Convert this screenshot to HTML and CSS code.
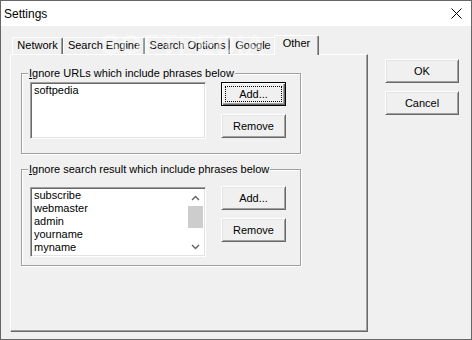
FILE: index.html
```html
<!DOCTYPE html>
<html>
<head>
<meta charset="utf-8">
<title>Settings</title>
<link rel="stylesheet" href="styles.css">
</head>
<body>
<div class="window">
  <div class="titlebar">
    <span class="title">Settings</span>
    <svg class="close" width="11" height="11" viewBox="0 0 11 11"><path d="M0.5 0.5 L10.5 10.5 M10.5 0.5 L0.5 10.5" stroke="#000" stroke-width="1" fill="none"/></svg>
  </div>
  <div class="body">
    <div class="tabctl">
      <div class="tabstrip">
        <div class="tab tab-network">Network</div>
        <div class="tab tab-engine">Search Engine</div>
        <div class="tab tab-options">Search Options</div>
        <div class="tab tab-google">Google</div>
        <div class="tab tab-other tab-active">Other</div>
      </div>
      <div class="panel">
        <div class="group group-urls">
          <div class="group-label"><u>I</u>gnore URLs which include phrases below</div>
          <div class="group-row row-urls">
            <div class="listbox lb-urls">
              <div class="items">
                <div class="item">softpedia</div>
              </div>
            </div>
            <div class="btncol">
              <button class="btn btn-small btn-default"><span class="focus">Add...</span></button>
              <button class="btn btn-small">Remove</button>
            </div>
          </div>
        </div>
        <div class="group group-results">
          <div class="group-label"><u>I</u>gnore search result which include phrases below</div>
          <div class="group-row row-results">
            <div class="listbox lb-results">
              <div class="items">
                <div class="item">subscribe</div>
                <div class="item">webmaster</div>
                <div class="item">admin</div>
                <div class="item">yourname</div>
                <div class="item">myname</div>
              </div>
              <div class="scrollbar">
                <div class="sb-btn">
                  <svg width="9" height="6" viewBox="0 0 9 6"><path d="M1 5 L4.5 1.5 L8 5" stroke="#606060" stroke-width="1.4" fill="none"/></svg>
                </div>
                <div class="sb-thumb"></div>
                <div class="sb-track"></div>
                <div class="sb-btn">
                  <svg width="9" height="6" viewBox="0 0 9 6"><path d="M1 1 L4.5 4.5 L8 1" stroke="#606060" stroke-width="1.4" fill="none"/></svg>
                </div>
              </div>
            </div>
            <div class="btncol">
              <button class="btn btn-small">Add...</button>
              <button class="btn btn-small">Remove</button>
            </div>
          </div>
        </div>
      </div>
    </div>
    <div class="actions">
      <button class="btn btn-wide">OK</button>
      <button class="btn btn-wide">Cancel</button>
    </div>
  </div>
  <div class="watermark">SOFTPEDIA<sup class="reg">®</sup></div>
</div>
</body>
</html>
```
FILE: styles.css
```css
* { box-sizing: border-box; }
html, body { margin: 0; padding: 0; background: #f0f0f0; }
body {
  font-family: "Liberation Sans", Arial, sans-serif;
  font-size: 11px;
  color: #000;
}
.window {
  position: relative;
  width: 472px;
  height: 340px;
  border: 1px solid #666;
  background: #f0f0f0;
  display: flex;
  flex-direction: column;
  overflow: hidden;
}
.titlebar {
  height: 25px;
  flex: none;
  background: #fff;
  display: flex;
  align-items: center;
  justify-content: space-between;
  padding: 0 9px 0 3px;
}
.title {
  font-size: 12px;
  line-height: 16px;
}
.close { display: block; }
.body {
  display: flex;
  padding: 9px 0 0 9px;
}
.tabctl {
  width: 358px;
  display: flex;
  flex-direction: column;
}
.tabstrip {
  height: 19px;
  display: flex;
  align-items: flex-end;
  padding-left: 2px;
  position: relative;
  z-index: 1;
}
.tab {
  height: 17px;
  border-top: 1px solid #fff;
  border-left: 1px solid #fff;
  border-right: 1px solid #696969;
  border-top-left-radius: 2px;
  border-top-right-radius: 2px;
  box-shadow: inset -1px 0 0 #a0a0a0;
  background: #f0f0f0;
  text-align: center;
  line-height: 15px;
  white-space: nowrap;
}
.tab-network { width: 51px; }
.tab-engine { width: 82px; }
.tab-options { width: 85px; }
.tab-google { width: 46px; }
.tab-other { width: 41px; }
.tab-active {
  width: 45px;
  height: 20px;
  margin: 0 -2px -1px -2px;
  position: relative;
  z-index: 2;
  line-height: 15px;
}
.panel {
  height: 278px;
  border-top: 1px solid #fff;
  border-left: 1px solid #fff;
  border-right: 1px solid #696969;
  border-bottom: 1px solid #696969;
  box-shadow: inset -1px -1px 0 #a0a0a0;
  padding: 18px 0 0 10px;
}
.group {
  width: 280px;
  border: 1px solid #a0a0a0;
  box-shadow: inset 1px 1px 0 #fff, 1px 1px 0 #fff;
  display: flex;
  flex-direction: column;
}
.group-urls { height: 81px; }
.group-results { height: 97px; margin-top: 15px; }
.group-label {
  align-self: flex-start;
  margin: -7px 0 0 6px;
  padding: 0 1px;
  background: #f0f0f0;
  line-height: 13px;
  white-space: nowrap;
}
.group-label u { text-decoration-thickness: 1px; text-underline-offset: 1px; }
.group-row {
  display: flex;
  align-items: flex-start;
  padding-left: 8px;
  gap: 15px;
}
.row-urls { margin-top: 2px; }
.row-results { margin-top: 10px; }
.listbox {
  width: 176px;
  background: #fff;
  border: 1px solid;
  border-color: #a0a0a0 #fff #fff #a0a0a0;
  box-shadow: inset 1px 1px 0 #696969, inset -1px -1px 0 #e3e3e3;
  display: flex;
}
.lb-urls { height: 57px; padding: 1px 2px 1px 3px; }
.lb-results { height: 70px; margin-top: 1px; padding: 1px 1px 1px 3px; }
.items { flex: 1; }
.item { line-height: 13px; height: 13px; white-space: nowrap; }
.scrollbar {
  width: 17px;
  display: flex;
  flex-direction: column;
  background: #fff;
}
.sb-btn {
  height: 17px;
  display: flex;
  align-items: center;
  justify-content: center;
}
.sb-btn svg { display: block; }
.sb-thumb {
  height: 22px;
  margin: 0 1px;
  background: #cdcdcd;
}
.sb-track { flex: 1; }
.btncol {
  display: flex;
  flex-direction: column;
  gap: 8px;
}
.btn {
  height: 24px;
  margin: 0;
  padding: 0;
  font: inherit;
  color: #000;
  background: #f0f0f0;
  border: 1px solid;
  border-color: #fff #696969 #696969 #fff;
  box-shadow: inset 1px 1px 0 #e3e3e3, inset -1px -1px 0 #a0a0a0;
  display: flex;
  align-items: center;
  justify-content: center;
  line-height: 13px;
}
.btn-small { width: 65px; }
.btn-wide { width: 74px; }
.btn-default {
  border-color: #000;
  box-shadow: inset 1px 1px 0 #fff, inset -1px -1px 0 #696969, inset -2px -2px 0 #a0a0a0;
  padding: 3px;
  align-items: stretch;
}
.focus {
  flex: 1;
  border: 1px dotted #000;
  display: flex;
  align-items: center;
  justify-content: center;
}
.actions {
  margin-left: 17px;
  padding-top: 24px;
  display: flex;
  flex-direction: column;
  gap: 8px;
}
.watermark {
  position: absolute;
  left: 100px;
  top: 30px;
  font-weight: bold;
  font-size: 28px;
  line-height: 28px;
  color: rgba(255, 255, 255, 0.45);
  letter-spacing: 0.5px;
  pointer-events: none;
  z-index: 5;
}
.reg { font-size: 9px; vertical-align: top; font-weight: normal; }
```
